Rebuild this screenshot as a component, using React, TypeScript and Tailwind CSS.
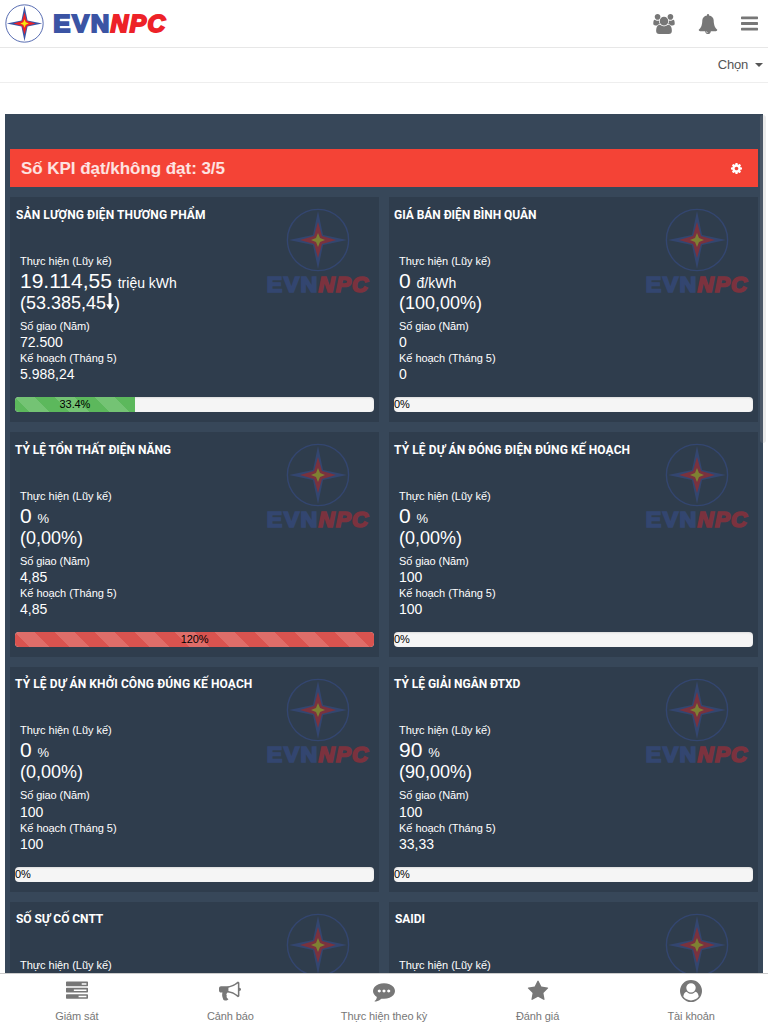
import React from 'react';

type Glyph = { box: string; d: string };

const glyphs: Record<string, Glyph> = {
  users: {
    box: '0 0 1920 1792',
    d: 'M593 896q-162 5-265 128h-134q-82 0-138-40.500t-56-118.500q0-353 124-353 6 0 43.500 21t97.500 42.500 119 21.500q67 0 133-23-5 37-5 66 0 139 81 256zm1071 637q0 120-73 189.500t-194 69.500h-874q-121 0-194-69.500t-73-189.500q0-53 3.500-103.500t14-109 26.500-108.500 43-97.500 62-81 85.500-53.500 111.500-20q10 0 43 21.500t73 48 107 48 135 21.500 135-21.500 107-48 73-48 43-21.500q61 0 111.500 20t85.500 53.500 62 81 43 97.500 26.500 108.500 14 109 3.500 103.500zm-1024-1277q0 106-75 181t-181 75-181-75-75-181 75-181 181-75 181 75 75 181zm704 384q0 159-112.500 271.500t-271.500 112.500-271.500-112.500-112.500-271.500 112.500-271.500 271.500-112.500 271.500 112.500 112.500 271.500zm576 225q0 78-56 118.500t-138 40.500h-134q-103-123-265-128 81-117 81-256 0-29-5-66 66 23 133 23 59 0 119-21.500t97.500-42.500 43.500-21q124 0 124 353zm-128-609q0 106-75 181t-181 75-181-75-75-181 75-181 181-75 181 75 75 181z',
  },
  bell: {
    box: '0 0 1792 1792',
    d: 'M912 1696q0-16-16-16-59 0-101.500-42.500t-42.500-101.500q0-16-16-16t-16 16q0 73 51.500 124.500t124.500 51.500q16 0 16-16zm816-288q0 52-38 90t-90 38h-448q0 106-75 181t-181 75-181-75-75-181h-448q-52 0-90-38t-38-90q50-42 91-88t85-119.500 74.500-158.500 50-206 19.500-260q0-152 117-282.500t307-158.500q-8-19-8-39 0-40 28-68t68-28 68 28 28 68q0 20-8 39 190 28 307 158.500t117 282.500q0 139 19.500 260t50 206 74.500 158.500 85 119.500 91 88z',
  },
  bars: {
    box: '128 128 1536 1536',
    d: 'M1664 1344v128q0 26-19 45t-45 19h-1408q-26 0-45-19t-19-45v-128q0-26 19-45t45-19h1408q26 0 45 19t19 45zm0-512v128q0 26-19 45t-45 19h-1408q-26 0-45-19t-19-45v-128q0-26 19-45t45-19h1408q26 0 45 19t19 45zm0-512v128q0 26-19 45t-45 19h-1408q-26 0-45-19t-19-45v-128q0-26 19-45t45-19h1408q26 0 45 19t19 45z',
  },
  tasks: {
    box: '0 0 1792 1792',
    d: 'M1024 1408h640v-128h-640v128zm-384-512h1024v-128h-1024v128zm640-512h384v-128h-384v128zm512 832v256q0 26-19 45t-45 19h-1664q-26 0-45-19t-19-45v-256q0-26 19-45t45-19h1664q26 0 45 19t19 45zm0-512v256q0 26-19 45t-45 19h-1664q-26 0-45-19t-19-45v-256q0-26 19-45t45-19h1664q26 0 45 19t19 45zm0-512v256q0 26-19 45t-45 19h-1664q-26 0-45-19t-19-45v-256q0-26 19-45t45-19h1664q26 0 45 19t19 45z',
  },
  bullhorn: {
    box: '0 0 1792 1792',
    d: 'M1664 640q53 0 90.500 37.500t37.500 90.500-37.500 90.500-90.500 37.500v384q0 52-38 90t-90 38q-417-347-812-380-58 19-91 66t-31 100.500 40 92.500q-20 33-23 65.500t6 58 33.500 55 48 50 61.500 50.500q-29 58-111.500 83t-168.500 11.500-132-55.500q-7-23-29.500-87.500t-32-94.500-23-89-15-101 3.500-98.500 22-110.500h-122q-66 0-113-47t-47-113v-192q0-66 47-113t113-47h480q435 0 896-384 52 0 90 38t38 90v384zm-128 604v-954q-394 302-768 343v270q377 42 768 341z',
  },
  comment: {
    box: '0 0 1792 1792',
    d: 'M640 896q0-53-37.500-90.500t-90.500-37.500-90.500 37.500-37.500 90.500 37.500 90.500 90.500 37.500 90.500-37.500 37.500-90.500zm384 0q0-53-37.500-90.500t-90.500-37.500-90.500 37.500-37.500 90.500 37.500 90.500 90.500 37.500 90.500-37.500 37.500-90.500zm384 0q0-53-37.500-90.500t-90.500-37.500-90.500 37.500-37.500 90.500 37.500 90.500 90.500 37.500 90.500-37.500 37.500-90.500zm384 0q0 174-120 321.500t-326 233-450 85.500q-110 0-211-18-173 173-435 229-52 10-86 13-12 1-22-6t-13-18q-4-15 20-37 5-5 23.500-21.500t25.500-23.500 23.500-25.500 24-31.500 20.500-37 20-48 14.500-57.500 12.500-72.500q-146-90-229.500-216.500t-83.500-269.500q0-174 120-321.500t326-233 450-85.500 450 85.500 326 233 120 321.500z',
  },
  star: {
    box: '0 0 1792 1792',
    d: 'M1728 647q0 22-26 48l-363 354 86 500q1 7 1 20 0 21-10.500 35.500t-30.500 14.500q-19 0-40-12l-449-236-449 236q-22 12-40 12-21 0-31.500-14.500t-10.500-35.500q0-6 2-20l86-500-364-354q-25-27-25-48 0-37 56-46l502-73 225-455q19-41 49-41t49 41l225 455 502 73q56 9 56 46z',
  },
  user: {
    box: '0 0 1792 1792',
    d: 'M1523 1339q-22-155-87.500-257.500t-184.500-118.500q-67 74-159.500 115.500t-195.500 41.500-195.500-41.500-159.500-115.500q-119 16-184.500 118.500t-87.500 257.500q106 150 271 237.500t356 87.500 356-87.500 271-237.500zm-243-699q0-159-112.500-271.500t-271.500-112.500-271.500 112.500-112.500 271.500 112.500 271.500 271.500 112.500 271.500-112.500 112.500-271.500zm512 256q0 182-71 347.500t-190.500 286-285.500 191.500-349 71q-182 0-348-71t-286-191-191-286-71-348 71-348 191-286 286-191 348-71 348 71 286 191 191 286 71 348z',
  },
  cog: {
    box: '128 128 1536 1536',
    d: 'M1152 896q0-106-75-181t-181-75-181 75-75 181 75 181 181 75 181-75 75-181zm512-109v222q0 12-8 23t-20 13l-185 28q-19 54-39 91 35 50 107 138 10 12 10 25t-9 23q-27 37-99 108t-94 71q-12 0-26-9l-138-108q-44 23-91 38-16 136-29 186-7 28-36 28h-222q-14 0-24.500-8.500t-11.500-21.500l-28-184q-49-16-90-37l-141 107q-10 9-25 9-14 0-25-11-126-114-165-168-7-10-7-23 0-12 8-23 15-21 51-66.500t54-70.500q-27-50-41-99l-183-27q-13-2-21-12.500t-8-23.500v-222q0-12 8-23t19-13l186-28q14-46 39-92-40-57-107-138-10-12-10-24 0-10 9-23 26-36 98.500-107.500t94.500-71.500q13 0 26 10l138 107q44-23 91-38 16-136 29-186 7-28 36-28h222q14 0 24.500 8.500t11.500 21.500l28 184q49 16 90 37l142-107q9-9 24-9 13 0 25 10 129 119 165 170 7 8 7 22 0 12-8 23-15 21-51 66.500t-54 70.500q26 50 41 98l183 28q13 2 21 12.500t8 23.500z',
  },
  down: {
    box: '0 0 8 18',
    d: 'M2.500 0h3v12h2.500L4 18 0 12h2.500z',
  },
};

function Icon({ name, className }: { name: string; className: string }) {
  const g = glyphs[name];
  return (
    <svg viewBox={g.box} className={className} fill="currentColor">
      <path d={g.d} />
    </svg>
  );
}

function Emblem() {
  return (
    <g>
      <circle r="30.600" fill="none" stroke="#3b54a4" strokeWidth="1.400" />
      <path fill="#3b54a4" d="M0-29 5-5 29 0 5 5 0 29-5 5-29 0-5-5z" />
      <path fill="#ed2228" d="M0-18 4-4 18 0 4 4 0 18-4 4-18 0-4-4z" />
      <path fill="#f5e80c" d="M0-7 2-2 7 0 2 2 0 7-2 2-7 0-2-2z" />
    </g>
  );
}

function Wordmark() {
  return (
    <g fontFamily="Liberation Sans, Arial, sans-serif" fontWeight="700" fontSize="21.500" strokeWidth="1.700" letterSpacing="1.300">
      <text x="0.800" y="15.300" textLength="52" lengthAdjust="spacingAndGlyphs" fill="#3b54a4" stroke="#3b54a4">EVN</text>
      <text x="52.500" y="15.300" textLength="51" lengthAdjust="spacingAndGlyphs" fontStyle="italic" fill="#ed2228" stroke="#ed2228">NPC</text>
    </g>
  );
}

type Kpi = {
  title: string;
  value: string;
  unit: string;
  ratio: string;
  down?: boolean;
  year: string;
  month: string;
  percent: string;
  fill?: 'green' | 'red';
};

const kpis: Kpi[] = [
  { title: 'SẢN LƯỢNG ĐIỆN THƯƠNG PHẨM', value: '19.114,55', unit: 'triệu kWh', ratio: '53.385,45', down: true, year: '72.500', month: '5.988,24', percent: '33.4%', fill: 'green' },
  { title: 'GIÁ BÁN ĐIỆN BÌNH QUÂN', value: '0', unit: 'đ/kWh', ratio: '100,00%', year: '0', month: '0', percent: '0%' },
  { title: 'TỶ LỆ TỔN THẤT ĐIỆN NĂNG', value: '0', unit: '%', ratio: '0,00%', year: '4,85', month: '4,85', percent: '120%', fill: 'red' },
  { title: 'TỶ LỆ DỰ ÁN ĐÓNG ĐIỆN ĐÚNG KẾ HOẠCH', value: '0', unit: '%', ratio: '0,00%', year: '100', month: '100', percent: '0%' },
  { title: 'TỶ LỆ DỰ ÁN KHỞI CÔNG ĐÚNG KẾ HOẠCH', value: '0', unit: '%', ratio: '0,00%', year: '100', month: '100', percent: '0%' },
  { title: 'TỶ LỆ GIẢI NGÂN ĐTXD', value: '90', unit: '%', ratio: '90,00%', year: '100', month: '33,33', percent: '0%' },
];

const partialKpis = ['SỐ SỰ CỐ CNTT', 'SAIDI'];

const stripes =
  'bg-[linear-gradient(45deg,rgba(255,255,255,.15)_25%,transparent_25%,transparent_50%,rgba(255,255,255,.15)_50%,rgba(255,255,255,.15)_75%,transparent_75%,transparent)] bg-[length:40px_40px]';

function Progress({ kpi }: { kpi: Kpi }) {
  return (
    <div className="h-[15px] overflow-hidden rounded-[4px] bg-[#f5f5f5] text-[11px] leading-[15px] tracking-[-0.1px] text-black shadow-[inset_0_1px_2px_rgba(0,0,0,0.1)]">
      {kpi.fill === 'green' && <div className={`h-full w-[33.4%] bg-[#5cb85c] text-center ${stripes}`}>{kpi.percent}</div>}
      {kpi.fill === 'red' && <div className={`h-full w-full bg-[#d9534f] text-center ${stripes}`}>{kpi.percent}</div>}
      {!kpi.fill && <div>{kpi.percent}</div>}
    </div>
  );
}

function Card({ title, kpi }: { title: string; kpi?: Kpi }) {
  const inset = title.startsWith('S') ? 'pl-[6px]' : 'pl-[5px]';
  const tracking = title.length > 25 ? 'tracking-[0.11px]' : 'tracking-[-0.04px]';
  return (
    <section className="relative h-[224.900px] bg-[#2f3d4d] text-white">
      <svg className="absolute right-[9px] top-[11px] h-[88px] w-[105px] overflow-visible opacity-40" viewBox="0 0 105 88">
        <g transform="translate(53 32)"><Emblem /></g>
        {kpi && <g transform="translate(1 69)"><Wordmark /></g>}
      </svg>
      <h2 className={`pt-[8.660px] font-[Roboto,sans-serif] text-[12px] font-bold leading-[18px] ${tracking} ${inset}`}>{title}</h2>
      <div className="pl-[10px] pt-[29px]">
        <p className="text-[11px] leading-[16px] tracking-[-0.04px]">Thực hiện (Lũy kế)</p>
        {kpi && (
          <>
            <p className="text-[21px] leading-[24px]">
              {kpi.value}{' '}
              <span className={kpi.unit === '%' ? 'text-[13px] leading-none' : 'text-[14px] leading-none'}>{kpi.unit}</span>
            </p>
            <p className="flex items-center text-[18px] leading-[20px]">
              ({kpi.ratio}
              {kpi.down && <Icon name="down" className="-mt-[2px] h-[17px] w-[8px]" />})
            </p>
            <p className="mt-[5px] text-[11px] leading-[16px] tracking-[-0.1px]">Số giao (Năm)</p>
            <p className="mt-[0.200px] text-[14px] leading-[16px]">{kpi.year}</p>
            <p className="text-[11px] leading-[16px] tracking-[-0.04px]">Kế hoạch (Tháng 5)</p>
            <p className="text-[14px] leading-[16px]">{kpi.month}</p>
          </>
        )}
      </div>
      {kpi && (
        <div className="px-[5px] pt-[15.200px]">
          <Progress kpi={kpi} />
        </div>
      )}
    </section>
  );
}

const tabs = [
  { icon: 'tasks', label: 'Giám sát' },
  { icon: 'bullhorn', label: 'Cảnh báo' },
  { icon: 'comment', label: 'Thực hiện theo kỳ' },
  { icon: 'star', label: 'Đánh giá' },
  { icon: 'user', label: 'Tài khoản' },
];

export default function App() {
  return (
    <div className="flex h-[1024px] w-[768px] flex-col overflow-hidden bg-white font-['Liberation_Sans',Arial,sans-serif]">
      <header className="flex h-[48px] shrink-0 items-center justify-between border-b border-[#e7e7e7] pl-[5px] pr-[10px]">
        <svg className="h-[40px] w-[164px] overflow-visible" viewBox="0 0 164 40">
          <g transform="translate(19.500 19.500) scale(.61)"><Emblem /></g>
          <g transform="translate(47.500 11.200) scale(1.105)"><Wordmark /></g>
        </svg>
        <div className="flex items-center text-[#777]">
          <Icon name="users" className="mr-[23px] h-[20px] w-[22px]" />
          <Icon name="bell" className="mr-[23px] h-[20px] w-[20px]" />
          <Icon name="bars" className="h-[17px] w-[17px]" />
        </div>
      </header>
      <div className="flex h-[35px] shrink-0 items-center justify-end border-b border-[#eee] pr-[5px] text-[13px] tracking-[-0.2px] text-[#555]">
        Chọn
        <span className="ml-[7px] border-x-4 border-t-4 border-x-transparent border-t-[#555]" />
      </div>
      <main className="relative mt-[31px] min-h-0 flex-1 overflow-hidden pl-[5px] pr-[5px]">
        <div className="bg-[#374759] px-[5px] pt-[35px]">
          <div className="flex h-[38px] items-center justify-between bg-[#f44336] pl-[11px] pr-[16px] text-[17px] font-bold tracking-[-0.04px] text-white/85">
            <span className="pt-[2px]">Số KPI đạt/không đạt: 3/5</span>
            <Icon name="cog" className="h-[11px] w-[11px] text-white" />
          </div>
          <div className="mt-[10px] grid grid-cols-2 gap-[10px]">
            {kpis.map((kpi) => (
              <Card key={kpi.title} title={kpi.title} kpi={kpi} />
            ))}
            {partialKpis.map((title) => (
              <Card key={title} title={title} />
            ))}
          </div>
        </div>
        <div className="absolute right-[2px] top-[1px] h-[328px] w-[6px] rounded-[3px] bg-[#999]/20" />
      </main>
      <nav className="grid h-[51px] shrink-0 grid-cols-5 border-t border-[#ccc] bg-white">
        {tabs.map((tab) => (
          <div key={tab.label} className="flex flex-col items-center pt-[6px] text-[11px] leading-[16px] tracking-[-0.1px] text-[#777]">
            <Icon name={tab.icon} className="mb-[6px] h-[22px] w-[22px] shrink-0" />
            {tab.label}
          </div>
        ))}
      </nav>
    </div>
  );
}
